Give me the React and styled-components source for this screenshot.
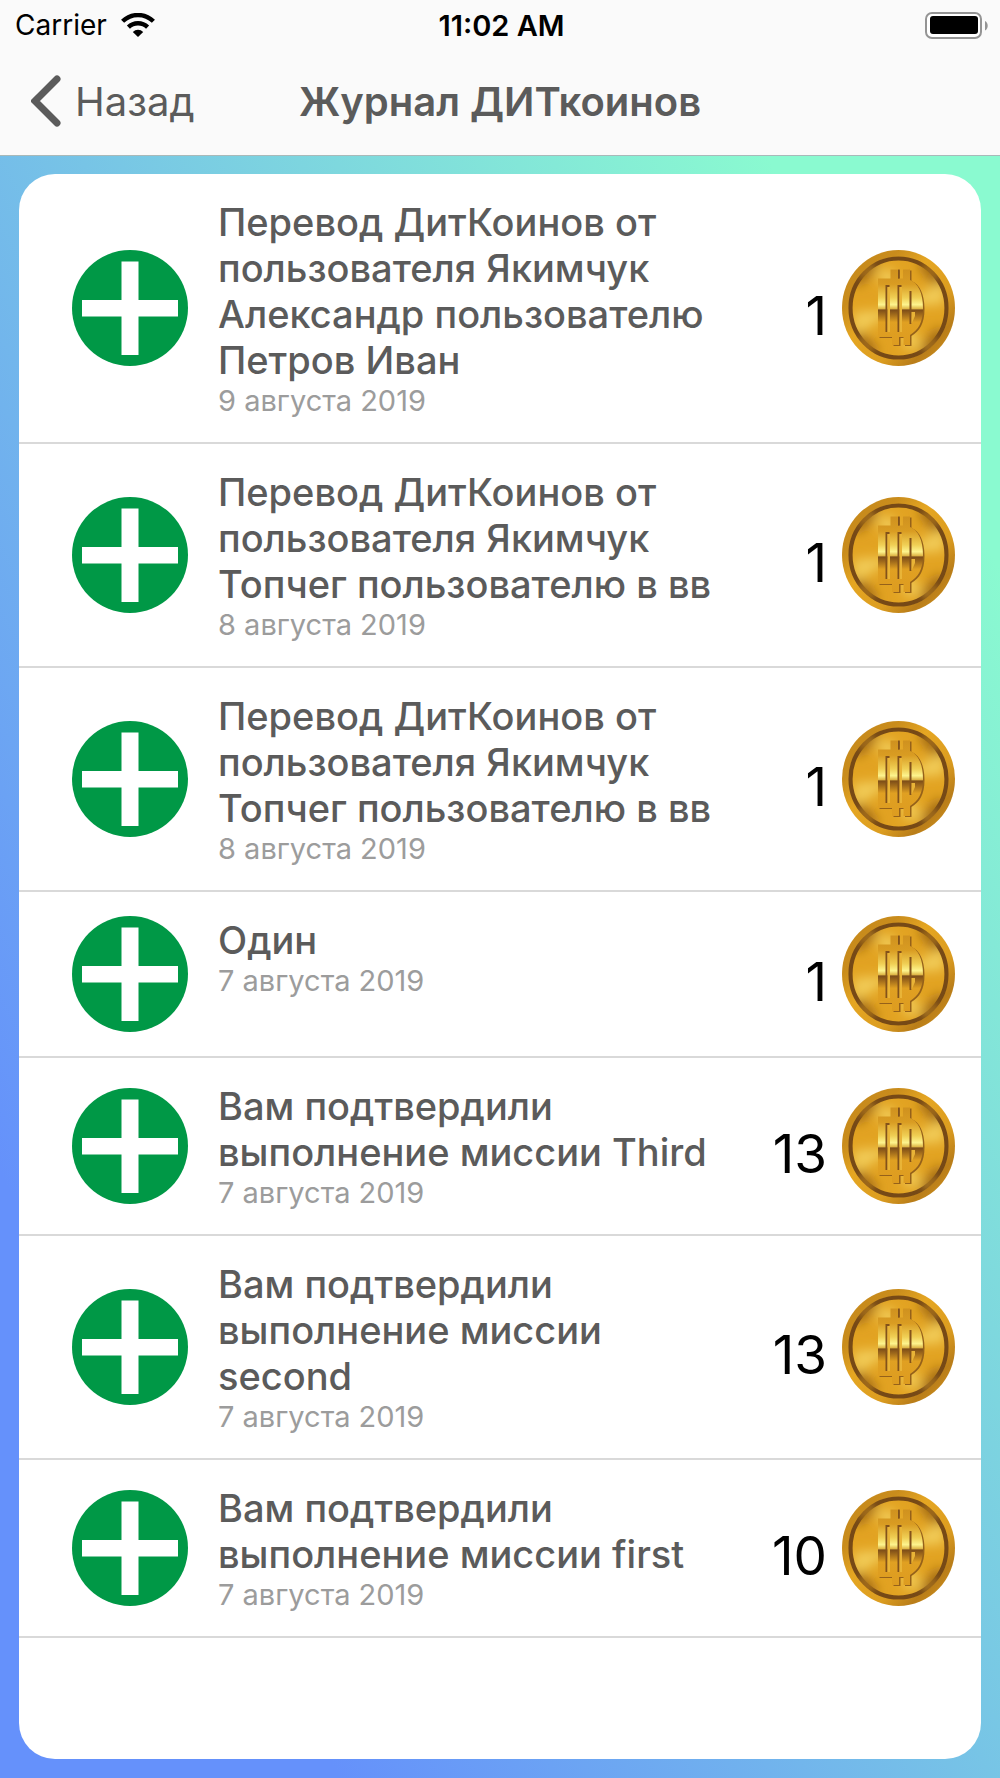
import React, { useId } from 'react';
import { styled, createGlobalStyle } from 'styled-components';

const operations = [
  {
    id: 1,
    title: 'Перевод ДитКоинов от пользователя Якимчук Александр пользователю Петров Иван',
    date: '9 августа 2019',
    amount: 1,
  },
  {
    id: 2,
    title: 'Перевод ДитКоинов от пользователя Якимчук Топчег пользователю в вв',
    date: '8 августа 2019',
    amount: 1,
  },
  {
    id: 3,
    title: 'Перевод ДитКоинов от пользователя Якимчук Топчег пользователю в вв',
    date: '8 августа 2019',
    amount: 1,
  },
  { id: 4, title: 'Один', date: '7 августа 2019', amount: 1 },
  {
    id: 5,
    title: 'Вам подтвердили выполнение миссии Third',
    date: '7 августа 2019',
    amount: 13,
  },
  {
    id: 6,
    title: 'Вам подтвердили выполнение миссии second',
    date: '7 августа 2019',
    amount: 13,
  },
  {
    id: 7,
    title: 'Вам подтвердили выполнение миссии first',
    date: '7 августа 2019',
    amount: 10,
  },
];

const WifiIcon = () => (
  <svg width='34' height='24' viewBox='0 0 34 24' aria-hidden='true'>
    <path d='M17 24l-5.2-5.1a7.6 7.6 0 0 1 10.4 0z' />
    <g fill='none' stroke='#000' strokeWidth='4.4'>
      <path d='M7.4 14.2a13.8 13.8 0 0 1 19.2 0' />
      <path d='M1.6 8.3a22 22 0 0 1 30.8 0' />
    </g>
  </svg>
);

const BatteryIcon = () => (
  <svg width='63' height='27' viewBox='0 0 63 27' aria-hidden='true'>
    <rect x='1' y='1' width='55' height='25' rx='6' fill='#fff' stroke='#949494' strokeWidth='2' />
    <rect x='5' y='4' width='48' height='18' rx='3' />
    <path d='M60 9c3.6 1.6 3.6 8 0 9.6z' fill='#949494' />
  </svg>
);

const BackIcon = () => (
  <svg width='30' height='52' viewBox='0 0 30 52' aria-hidden='true'>
    <path
      d='M26 4L4 26l22 22'
      fill='none'
      stroke='#5b5b5b'
      strokeWidth='7'
      strokeLinecap='round'
      strokeLinejoin='miter'
    />
  </svg>
);

const PlusIcon = () => (
  <svg width='116' height='116' viewBox='0 0 116 116' aria-hidden='true'>
    <circle cx='58' cy='58' r='58' fill='#009846' />
    <path d='M49.5 11.5h17V50H106v16.5H66.5V105h-17V66.5H10V50h39.5z' fill='#fff' />
  </svg>
);

// буква D с двумя вертикальными штрихами
const COIN_SIGN =
  'M36 28.5h12.5v-9h7.5v9h5v-9h7V30c8 3 13 13 13 28s-5 22-13 27v10h-6.5v-8H57v8h-7v-8H36z';

const CoinIcon = () => {
  const id = useId();

  return (
    <svg width='113' height='116' viewBox='0 0 113 116' aria-hidden='true'>
      <defs>
        <linearGradient id={`${id}rim`} x1='0' y1='0' x2='1' y2='1'>
          <stop offset='0.1' stopColor='#c78a1c' />
          <stop offset='0.25' stopColor='#c98c1c' />
          <stop offset='0.42' stopColor='#e5a622' />
          <stop offset='0.65' stopColor='#dc9d20' />
          <stop offset='0.8' stopColor='#b97d19' />
          <stop offset='0.95' stopColor='#d3951e' />
        </linearGradient>
        <linearGradient id={`${id}sign`} x1='0' y1='19' x2='0' y2='95' gradientUnits='userSpaceOnUse'>
          <stop offset='0' stopColor='#cf911f' />
          <stop offset='0.2' stopColor='#d99c22' />
          <stop offset='0.38' stopColor='#f0cf55' />
          <stop offset='0.47' stopColor='#fdf48e' />
          <stop offset='0.52' stopColor='#e0b94a' />
          <stop offset='0.54' stopColor='#7d4d18' />
          <stop offset='0.6' stopColor='#a06a1b' />
          <stop offset='0.7' stopColor='#e0a022' />
          <stop offset='1' stopColor='#dd9c20' />
        </linearGradient>
        <filter id={`${id}soft`} x='-50%' y='-50%' width='200%' height='200%'>
          <feGaussianBlur stdDeviation='6' />
        </filter>
        <filter id={`${id}fade`} x='-50%' y='-50%' width='200%' height='200%'>
          <feGaussianBlur stdDeviation='3' />
        </filter>
        <clipPath id={`${id}face`}>
          <ellipse cx='56.5' cy='58' rx='50' ry='51.5' />
        </clipPath>
        {/* кольцо светлеет по диагоналям */}
        <mask id={`${id}ring`}>
          <rect width='113' height='116' fill='#fff' />
          <g fill='#555' filter={`url(#${id}fade)`}>
            <circle cx='24' cy='21' r='9' />
            <circle cx='89' cy='21' r='9' />
            <circle cx='24' cy='95' r='9' />
            <circle cx='89' cy='95' r='9' />
          </g>
        </mask>
      </defs>
      <ellipse cx='56.5' cy='58' rx='56.5' ry='58' fill={`url(#${id}rim)`} />
      <ellipse cx='56.5' cy='58' rx='50' ry='51.5' fill='#e2a322' />
      <g clipPath={`url(#${id}face)`}>
        {/* тени по диагоналям и блики на поверхности монеты */}
        <g filter={`url(#${id}soft)`}>
          <g stroke='#9c6615' strokeWidth='13'>
            <path d='M12 32L32 11' />
            <path d='M81 11l20 24' />
            <path d='M101 81L82 104' />
            <path d='M12 84l20 21' />
          </g>
          <g fill='#f2cd5a'>
            <path d='M60 56L102 30v24z' />
            <path d='M54 60L12 62v24z' />
            <path d='M56 54L32 20h20z' />
            <path d='M58 64l4 34h20z' />
          </g>
        </g>
      </g>
      <ellipse
        cx='56.5'
        cy='58'
        rx='48'
        ry='49.5'
        fill='none'
        stroke='#764916'
        strokeWidth='4.2'
        mask={`url(#${id}ring)`}
      />
      <path d={COIN_SIGN} fill='#95611a' transform='translate(1.5 1)' />
      <path d={COIN_SIGN} fill={`url(#${id}sign)`} />
      <path
        d='M43.5 35h4v2h-2v45h-2zM55.5 35h4v2h-2v45h-2zM67.5 41h2v33h-2zM56 19.5h1.8v9H56z'
        fill='#83521a'
      />
      <path
        d='M45.5 37H48v45h-2.5zM57.5 37H60v45h-2.5zM69.5 74V62h3.500v4z'
        fill='#e9b437'
      />
    </svg>
  );
};

function App() {
  return (
    <Screen>
      <GlobalStyle />
      <Header>
        <StatusBar>
          <Carrier>
            Carrier
            <WifiIcon />
          </Carrier>
          <Time>11:02 AM</Time>
          <Battery>
            <BatteryIcon />
          </Battery>
        </StatusBar>
        <NavBar>
          <BackButton type='button'>
            <BackIcon />
            Назад
          </BackButton>
          <Title>Журнал ДИТкоинов</Title>
        </NavBar>
      </Header>
      <Card>
        <List>
          {operations.map(({ id, title, date, amount }) => (
            <Row key={id}>
              <PlusIcon />
              <Info>
                <RowTitle>{title}</RowTitle>
                <RowDate>{date}</RowDate>
              </Info>
              <Amount>{amount}</Amount>
              <CoinIcon />
            </Row>
          ))}
        </List>
      </Card>
    </Screen>
  );
}

export default App;

const GlobalStyle = createGlobalStyle`
  * {
    box-sizing: border-box;
  }
  body {
    margin: 0;
    font-family: Inter, 'Liberation Sans', sans-serif;
  }
`;

const Screen = styled.div`
  min-height: 100vh;
  display: flex;
  flex-direction: column;
  background: linear-gradient(to top right, #6591fb 17%, #8afad0 84%);
`;

const Header = styled.header`
  padding-bottom: 3px;
  background: #fafafa;
  border-bottom: 1px solid #a9b9b9;
`;

const StatusBar = styled.div`
  height: 50px;
  padding: 0 12px 0 15px;
  display: grid;
  grid-template-columns: 1fr auto 1fr;
  align-items: center;
  font-size: 28px;
`;

const Carrier = styled.div`
  display: flex;
  align-items: center;
  gap: 14px;
`;

const Time = styled.div`
  font-size: 29px;
  font-weight: 600;
`;

const Battery = styled.div`
  display: flex;
  justify-content: flex-end;
`;

const NavBar = styled.nav`
  height: 102px;
  padding: 0 31px;
  display: grid;
  grid-template-columns: 1fr auto 1fr;
  align-items: center;
`;

const BackButton = styled.button`
  padding: 0;
  display: flex;
  align-items: center;
  justify-self: start;
  gap: 14px;
  border: none;
  background: none;
  color: #5b5b5b;
  font-family: inherit;
  font-size: 40px;
  cursor: pointer;
`;

const Title = styled.h1`
  margin: 0;
  color: #5b5b5b;
  font-size: 40px;
  font-weight: 600;
`;

const Card = styled.main`
  flex: 1;
  margin: 18px 19px 19px;
  background: #fff;
  border-radius: 36px;
  overflow: hidden;
`;

const List = styled.ul`
  margin: 0;
  padding: 0;
  list-style: none;
`;

const Row = styled.li`
  min-height: 166px;
  padding: 0 26px 0 53px;
  display: flex;
  align-items: center;
  border-bottom: 2px solid #d9d9d9;
  svg {
    flex-shrink: 0;
  }
`;

const Info = styled.div`
  flex: 1;
  align-self: flex-start;
  padding: 25px 0 24px 30px;
`;

const RowTitle = styled.div`
  color: #5b5b5b;
  font-size: 38px;
  font-weight: 500;
  line-height: 46px;
`;

const RowDate = styled.div`
  color: #9c9c9c;
  font-size: 29px;
  line-height: 35px;
`;

const Amount = styled.div`
  width: 100px;
  padding: 16px 15px 0 0;
  text-align: right;
  font-size: 53px;
`;
